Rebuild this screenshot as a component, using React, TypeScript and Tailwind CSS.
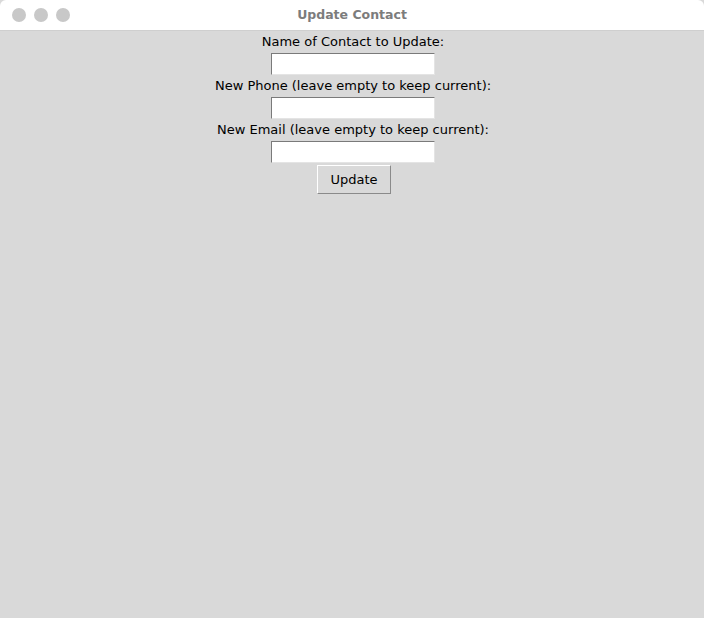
export default function App() {
  const fields = [
    "Name of Contact to Update:",
    "New Phone (leave empty to keep current):",
    "New Email (leave empty to keep current):",
  ]

  return (
    <div className="w-[704px] h-[618px] flex flex-col bg-[#d9d9d9] font-['DejaVu_Sans',sans-serif] overflow-hidden">
      <div className="h-[31px] shrink-0 bg-white border-b border-[#cfcfcf] rounded-t-[6px] flex items-center">
        <div className="flex gap-[8px] pl-[12px]">
          <span className="w-[14px] h-[14px] rounded-full bg-[#c8c8c8]" />
          <span className="w-[14px] h-[14px] rounded-full bg-[#c8c8c8]" />
          <span className="w-[14px] h-[14px] rounded-full bg-[#c8c8c8]" />
        </div>
        <div className="flex-1 text-center text-[12.5px] font-bold text-[#7c7c7c] pr-[70px]">
          Update Contact
        </div>
      </div>

      <div className="flex flex-col items-center text-[13px] text-black pl-[2px]">
        {fields.map((label) => (
          <div key={label} className="flex flex-col items-center">
            <div className="h-[22px] pt-[1px] leading-[20px]">{label}</div>
            <input
              type="text"
              className="w-[164px] h-[22px] bg-white border border-t-[#7a7a7a] border-l-[#7a7a7a] border-b-[#e4e4e4] border-r-[#e4e4e4] outline-none"
            />
          </div>
        ))}
        <button className="mt-[2px] ml-[2px] w-[74px] h-[29px] bg-[#d9d9d9] border border-t-white border-l-white border-b-[#8a8a8a] border-r-[#8a8a8a] text-[13px]">
          Update
        </button>
      </div>
    </div>
  )
}
